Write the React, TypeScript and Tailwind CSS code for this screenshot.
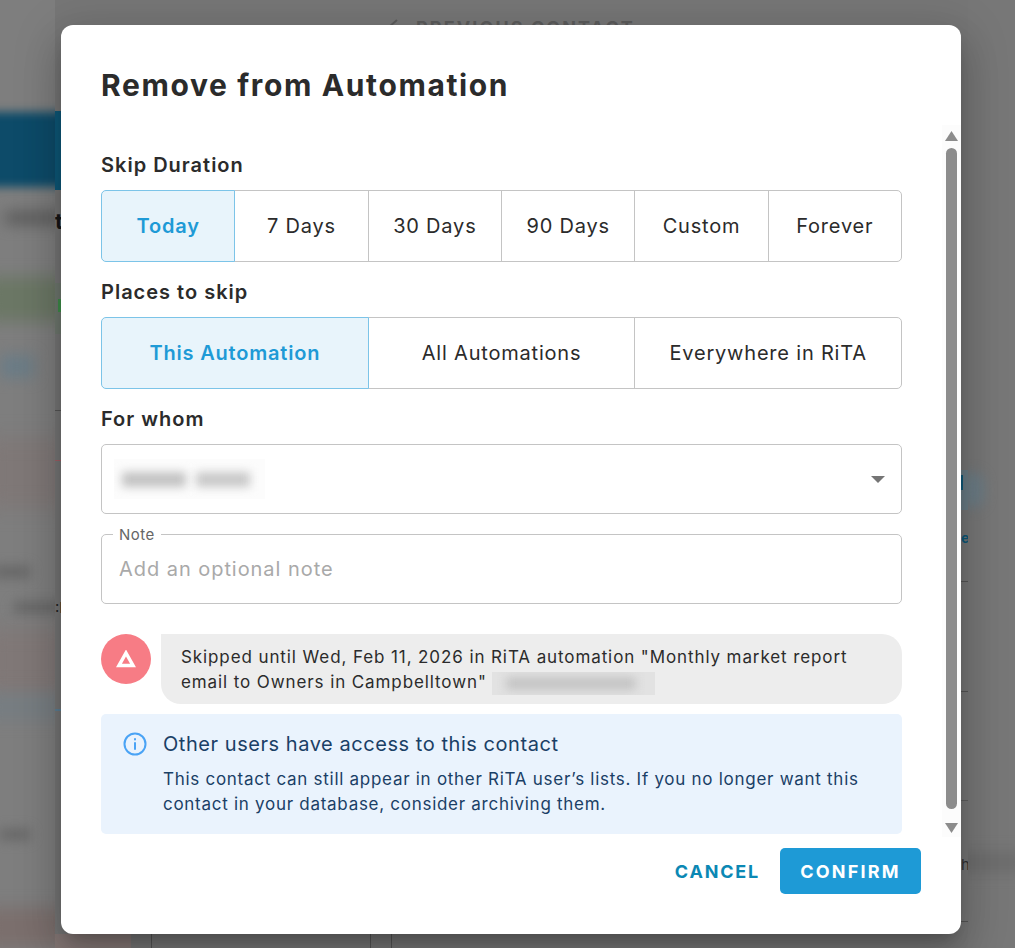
import React from "react";

const font = "font-['Inter','Liberation_Sans',sans-serif]";

function Seg({ items }: { items: string[] }) {
  return (
    <div className="flex h-[72px]">
      {items.map((t, i) => (
        <div
          key={t}
          className={
            i === 0
              ? "relative z-10 flex flex-1 basis-0 items-center justify-center rounded-l-[5px] border border-[#7cc4e8] bg-[#e8f4fb] text-[20px] font-semibold tracking-[0.8px] text-[#1e9ad6]"
              : "-ml-px flex flex-1 basis-0 items-center justify-center border border-[#c4c4c4] text-[20px] tracking-[0.8px] text-[#2b2b2b] last:rounded-r-[5px]"
          }
        >
          {t}
        </div>
      ))}
    </div>
  );
}

function Heading({ children, className }: { children: React.ReactNode; className: string }) {
  return <p className={`text-[20px] font-semibold leading-[26px] tracking-[1px] text-[#2b2b2b] ${className}`}>{children}</p>;
}

function LeftBlur() {
  return (
    <div className="flex h-full w-[55px] shrink-0 flex-col overflow-hidden bg-[#7e7e7e]">
      <div className="-mx-4 mt-[112px] h-[76px] bg-[#0d4b69] blur-[5px]" />
      <div className="mt-[24px] ml-[5px] h-[14px] w-[60px] bg-[#5f5f5f] blur-[7px]" />
      <div className="-mx-4 mt-[52px] h-[44px] bg-[#6b7765] blur-[8px]" />
      <div className="mt-[34px] h-[24px] w-[34px] bg-[#6b7c86] blur-[7px]" />
      <div className="-mx-4 mt-[60px] h-[70px] bg-[#7f7877] blur-[10px]" />
      <div className="mt-[58px] ml-[-6px] h-[12px] w-[36px] bg-[#666] blur-[6px]" />
      <div className="mt-[24px] ml-[14px] h-[12px] w-[50px] bg-[#666] blur-[6px]" />
      <div className="-mx-4 mt-[16px] h-[64px] bg-[#807877] blur-[10px]" />
      <div className="-mx-4 mt-[2px] h-[24px] bg-[#767d82] blur-[8px]" />
      <div className="mt-[110px] h-[12px] w-[30px] bg-[#666] blur-[6px]" />
      <div className="-mx-4 mt-[68px] h-[40px] bg-[#7b6f6d] blur-[8px]" />
    </div>
  );
}

function RightBlur() {
  return (
    <div className="flex h-full w-[47px] shrink-0 flex-col overflow-hidden bg-[#777]">
      <div className="ml-[-8px] mt-[472px] h-[36px] w-[24px] rounded-full bg-[#6b7c85] blur-[6px]" />
      <div className="-mx-4 mt-[346px] h-[16px] bg-[#6a6a6a] blur-[8px]" />
    </div>
  );
}

function Background() {
  return (
    <div className="absolute inset-0 flex">
      <LeftBlur />
      <div className="flex h-full min-w-0 flex-1 flex-col bg-[#767676]">
        <div className="flex h-[54px] shrink-0 items-center gap-[16px] pl-[331px] text-[18px] font-bold tracking-[2.1px] text-[#5c5c5c]">
          <svg width="14" height="18" viewBox="0 0 14 18" fill="none" stroke="#5c5c5c" strokeWidth="2"><path d="M11 2 3 9l8 7" /></svg>
          <span>PREVIOUS CONTACT</span>
        </div>
        <div className="flex min-h-0 flex-1 justify-between">
          <div className="flex w-[6px] flex-col overflow-hidden">
            <div className="mt-[57px] h-[79px] shrink-0 bg-[#0d5878]" />
            <div className="mt-[18px] h-[26px] shrink-0 text-[22px] font-bold leading-[26px] text-[#161616]">t</div>
            <div className="mt-[49px] flex h-[51px] shrink-0 items-center justify-end bg-[#6f786f]">
              <div className="mb-[6px] h-[13px] w-[3px] bg-[#3f8f4a]" />
            </div>
            <div className="mt-[76px] h-px shrink-0 bg-[#555]" />
            <div className="mt-[49px] h-px shrink-0 bg-[#a05f66]" />
            <div className="mt-[138px] h-[18px] shrink-0 text-[15px] leading-[18px] text-[#222]">:R</div>
            <div className="mt-[92px] h-[2px] shrink-0 bg-[#5d7f95]" />
          </div>
          <div className="flex w-[7px] flex-col overflow-hidden">
            <div className="mt-[416px] flex h-[40px] shrink-0 bg-[#6a7c85] pt-[5px]">
              <div className="h-[15px] w-[2px] bg-[#0d5878]" />
            </div>
            <div className="mt-[20px] h-[16px] shrink-0 text-[14px] font-bold leading-[16px] text-[#0d5878]">e</div>
            <div className="mt-[35px] h-px shrink-0 bg-[#555]" />
            <div className="mt-[109px] h-px shrink-0 bg-[#555]" />
            <div className="mt-[108px] h-px shrink-0 bg-[#5f5f5f]" />
            <div className="mt-[55px] h-[18px] shrink-0 text-[15px] leading-[18px] text-[#333]">h</div>
            <div className="mt-[47px] h-px shrink-0 bg-[#555]" />
          </div>
        </div>
        <div className="flex h-[14px] shrink-0">
          <div className="w-[76px] bg-[#857876]" />
          <div className="w-[21px] border-r border-[#555]" />
          <div className="w-[219px] border-r border-[#555]" />
          <div className="w-[21px] border-r border-[#555]" />
        </div>
      </div>
      <RightBlur />
    </div>
  );
}

export default function App() {
  return (
    <div className={`relative h-[948px] w-[1015px] overflow-hidden bg-[#767676] ${font}`}>
      <Background />
      <div className="absolute left-[61px] top-[25px] flex h-[909px] w-[900px] flex-col rounded-[12px] bg-white shadow-[0_11px_15px_-7px_rgba(0,0,0,0.2),0_24px_38px_3px_rgba(0,0,0,0.14),0_9px_46px_8px_rgba(0,0,0,0.12)]">
        <h1 className="ml-[40px] mt-[40px] text-[30px] font-bold leading-[40px] tracking-[1.63px] text-[#2b2b2b]">Remove from Automation</h1>
        <div className="mt-[10px] flex min-h-0 flex-1">
          <div className="ml-[40px] mt-[37px] w-[801px]">
            <Heading className="">Skip Duration</Heading>
            <div className="mt-[12px]">
              <Seg items={["Today", "7 Days", "30 Days", "90 Days", "Custom", "Forever"]} />
            </div>
            <Heading className="mt-[17px]">Places to skip</Heading>
            <div className="mt-[12px]">
              <Seg items={["This Automation", "All Automations", "Everywhere in RiTA"]} />
            </div>
            <Heading className="mt-[17px]">For whom</Heading>
            <div className="mt-[12px] flex h-[70px] items-center justify-between rounded-[5px] border border-[#c4c4c4] pl-[12px] pr-[16px]">
              <div className="flex h-[40px] w-[151px] items-center gap-[10px] overflow-hidden bg-[#fcfcfc] pl-[8px]">
                <div className="h-[15px] w-[64px] shrink-0 bg-[#c2c2c2] blur-[5px]" />
                <div className="h-[15px] w-[54px] shrink-0 bg-[#c8c8c8] blur-[5px]" />
              </div>
              <svg width="14" height="7" viewBox="0 0 14 7"><path d="M0 0h14L7 7z" fill="#757575" /></svg>
            </div>
            <div className="relative mt-[20px] flex h-[70px] items-center rounded-[5px] border border-[#c4c4c4] px-[17px]">
              <span className="absolute -top-[9px] left-[11px] bg-white px-[6px] text-[15px] leading-[18px] tracking-[0.5px] text-[#666]">Note</span>
              <span className="text-[20px] tracking-[0.95px] text-[#a9a9a9]">Add an optional note</span>
            </div>
            <div className="mt-[30px] flex gap-[10px]">
              <div className="flex h-[50px] w-[50px] shrink-0 items-center justify-center rounded-full bg-[#f77c85]">
                <svg width="20" height="18" viewBox="0 0 20 18"><path d="M10 3 17 15.5H3z" fill="none" stroke="#fff" strokeWidth="3.5" /></svg>
              </div>
              <div className="h-[70px] flex-1 rounded-[20px] rounded-tl-none bg-[#ededed] px-[20px] pt-[11px] text-[17px] leading-[25px] tracking-[0.9px] text-[#2b2b2b]">
                Skipped until Wed, Feb 11, 2026 in RiTA automation "Monthly market report
                <br />
                email to Owners in Campbelltown"
                <span className="ml-[5px] inline-block h-[23px] w-[163px] overflow-hidden bg-[#e2e2e2] align-middle">
                  <span className="ml-[14px] mt-[5px] block h-[13px] w-[130px] bg-[#c4c4c4] blur-[5px]" />
                </span>
              </div>
            </div>
            <div className="mt-[10px] flex h-[120px] gap-[16px] rounded-[5px] bg-[#eaf3fd] px-[22px] pt-[16px]">
              <svg className="mt-[2px] shrink-0" width="24" height="24" viewBox="0 0 24 24" fill="none" stroke="#4aa3f5" strokeWidth="2" strokeLinecap="round"><circle cx="12" cy="12" r="10.5" /><path d="M12 11v6M12 7v.5" /></svg>
              <div className="text-[#1a4066]">
                <p className="text-[20px] leading-[28px] tracking-[0.55px]">Other users have access to this contact</p>
                <p className="mt-[9px] whitespace-nowrap text-[17px] leading-[25px] tracking-[0.72px]">
                  This contact can still appear in other RiTA user’s lists. If you no longer want this
                  <br />
                  contact in your database, consider archiving them.
                </p>
              </div>
            </div>
          </div>
          <div className="ml-[40px] mt-[10px] flex h-[712px] w-[19px] flex-col items-center bg-[#fcfcfc]">
            <svg className="mt-[6px] shrink-0" width="13" height="10" viewBox="0 0 13 10"><path d="M6.5 0 13 10H0z" fill="#8c8c8c" /></svg>
            <div className="mt-[7px] h-[661px] w-[11px] shrink-0 rounded-full bg-[#8c8c8c]" />
            <svg className="mt-[14px] shrink-0" width="13" height="10" viewBox="0 0 13 10"><path d="M0 0h13L6.5 10z" fill="#8c8c8c" /></svg>
          </div>
        </div>
        <div className="mb-[40px] flex items-center justify-end gap-[20px] pr-[40px]">
          <span className="text-[18px] font-bold tracking-[1.8px] text-[#0b88b4]">CANCEL</span>
          <span className="flex h-[46px] w-[141px] items-center justify-center rounded-[5px] bg-[#1e9ad6] text-[18px] font-bold tracking-[2.2px] text-white">CONFIRM</span>
        </div>
      </div>
    </div>
  );
}
